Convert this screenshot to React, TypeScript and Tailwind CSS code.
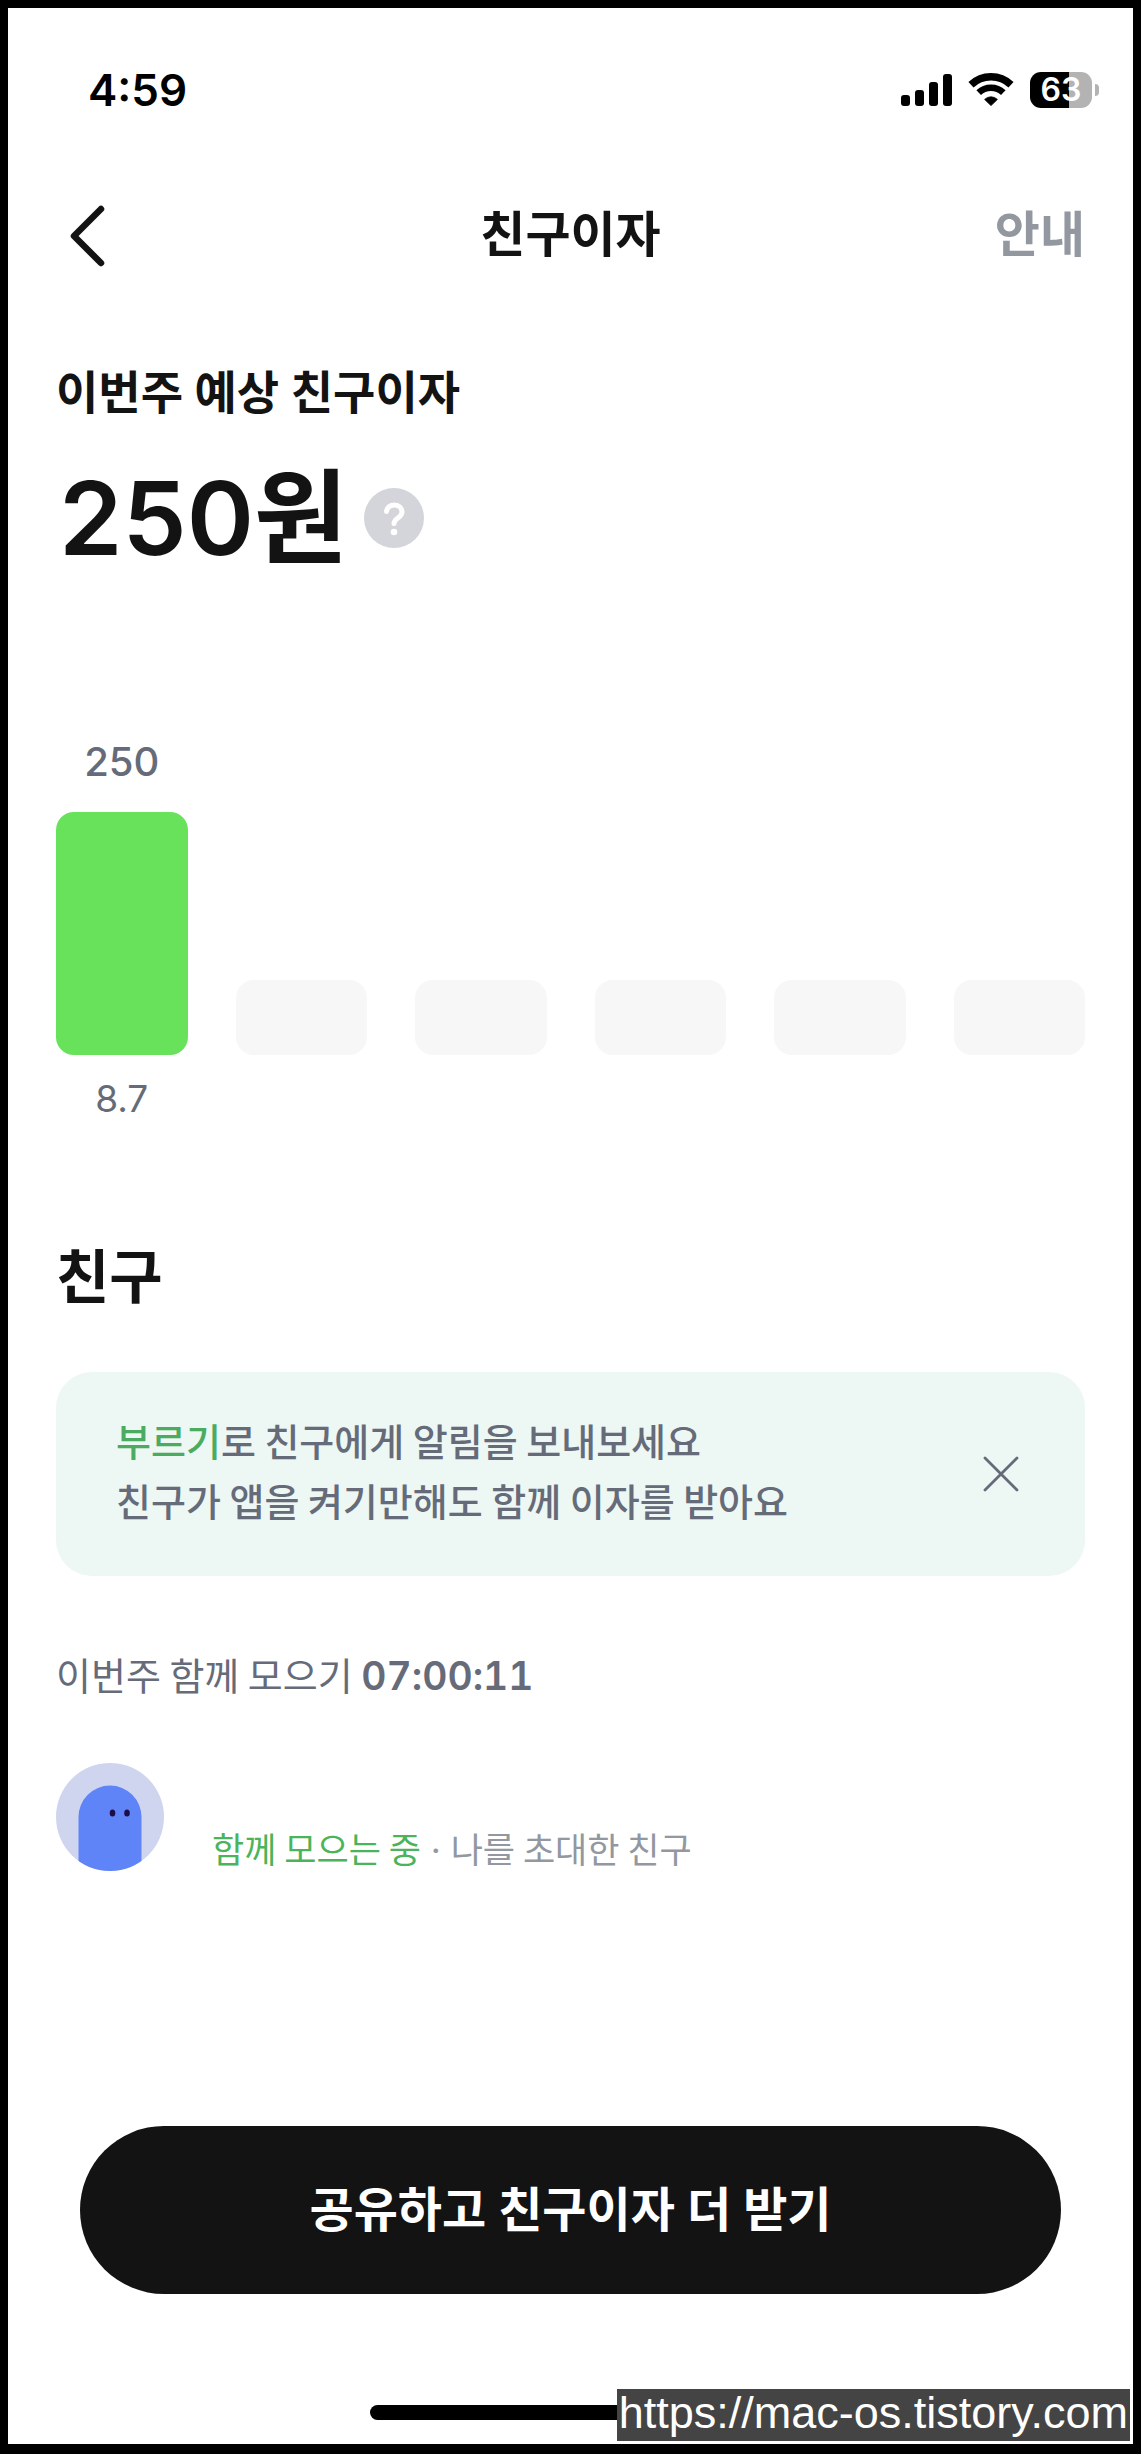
import { useState } from "react";

const bars = [
  { id: 1, amount: "250", date: "8.7", height: "h-[243px]", color: "bg-[#68e15b]" },
  { id: 2, amount: "", date: "", height: "h-[75px]", color: "bg-[#f7f7f7]" },
  { id: 3, amount: "", date: "", height: "h-[75px]", color: "bg-[#f7f7f7]" },
  { id: 4, amount: "", date: "", height: "h-[75px]", color: "bg-[#f7f7f7]" },
  { id: 5, amount: "", date: "", height: "h-[75px]", color: "bg-[#f7f7f7]" },
  { id: 6, amount: "", date: "", height: "h-[75px]", color: "bg-[#f7f7f7]" },
];

function StatusBar() {
  return (
    <div className="flex items-center justify-between pl-20 pr-[34px] pt-16 text-black">
      <span className="text-[44px] leading-9 font-semibold">4:59</span>
      <div className="flex items-center">
        <svg className="mr-4 h-9 w-[51px]" viewBox="0 0 51 36" fill="currentColor">
          <rect x="0" y="23" width="9" height="11" rx="3" />
          <rect x="14" y="18" width="9" height="16" rx="3" />
          <rect x="28" y="10" width="9" height="24" rx="3" />
          <rect x="42" y="2" width="9" height="32" rx="3" />
        </svg>
        <svg className="mr-4 h-9 w-[46px]" viewBox="0 0 46 36" fill="none" stroke="currentColor">
          <path d="M3 12.7 A29 29 0 0 1 43 12.7" strokeWidth="7.4" />
          <path d="M10.7 20.7 A17.8 17.8 0 0 1 35.3 20.7" strokeWidth="6.6" />
          <path
            d="M23 33.6 L16.6 27.4 A9.2 9.2 0 0 1 29.4 27.4 Z"
            fill="currentColor"
            strokeWidth="0.8"
            strokeLinejoin="round"
          />
        </svg>
        <div className="flex h-9 w-[62px] items-center justify-center rounded-[11px] bg-linear-to-r from-black from-63% to-[#b3b3b3] to-63%">
          <span className="text-[32px] leading-9 font-semibold text-white">63</span>
        </div>
        <div className="ml-[3px] h-3 w-1 rounded-r-full bg-[#b3b3b3]" />
      </div>
    </div>
  );
}

function NavBar() {
  return (
    <header className="mt-[95px] grid h-16 grid-cols-3 items-center px-12">
      <button type="button" aria-label="뒤로" className="h-16 w-16 pl-[11px]">
        <svg className="h-16 w-10" viewBox="0 0 40 64" fill="none" stroke="currentColor">
          <path d="M34 6 L7 33 L34 60" strokeWidth="6.5" strokeLinecap="round" strokeLinejoin="round" />
        </svg>
      </button>
      <h1 className="text-center text-[49px] leading-16 font-semibold">친구이자</h1>
      <a href="#" className="justify-self-end text-[49px] leading-16 font-semibold text-[#9297a0]">
        안내
      </a>
    </header>
  );
}

function InterestChart() {
  return (
    <div className="mt-40 grid grid-cols-6 items-end gap-12 text-center text-[#666b79]">
      {bars.map((bar) => (
        <div key={bar.id}>
          <div className="h-12 text-[40px] leading-12 font-medium">{bar.amount}</div>
          <div className={`mt-[26px] rounded-[18px] ${bar.height} ${bar.color}`} />
          <div className="mt-5 h-12 text-[37px] leading-12">{bar.date}</div>
        </div>
      ))}
    </div>
  );
}

function Notice({ onClose }: { onClose: () => void }) {
  return (
    <div className="mt-[63px] flex items-center justify-between rounded-[36px] bg-[#edf7f4] pt-[38px] pb-[46px] pr-16 pl-[60px]">
      <p className="font-['Noto_Sans_CJK_KR',sans-serif] text-[38px] leading-[60px] font-medium text-[#666b79]">
        <span className="text-[#4bab60]">부르기</span>로 친구에게 알림을 보내보세요
        <br />
        친구가 앱을 켜기만해도 함께 이자를 받아요
      </p>
      <button type="button" aria-label="닫기" onClick={onClose} className="pt-2">
        <svg className="h-10 w-10" viewBox="0 0 40 40" fill="none" stroke="#666b79">
          <path d="M4 4 L36 36 M36 4 L4 36" strokeWidth="2.8" strokeLinecap="round" />
        </svg>
      </button>
    </div>
  );
}

function Avatar() {
  return (
    <svg className="h-[108px] w-[108px] shrink-0" viewBox="0 0 108 108">
      <defs>
        <clipPath id="avatar">
          <circle cx="54" cy="54" r="54" />
        </clipPath>
      </defs>
      <g clipPath="url(#avatar)">
        <rect width="108" height="108" fill="#cfd5ee" />
        <path d="M22.5 108 V54 A31.5 31.5 0 0 1 85.5 54 V108 Z" fill="#5f84f8" />
        <ellipse cx="56.5" cy="50" rx="2.8" ry="3.6" fill="#1e0d47" />
        <ellipse cx="71" cy="50" rx="2.8" ry="3.6" fill="#1e0d47" />
      </g>
    </svg>
  );
}

export default function App() {
  const [noticeOpen, setNoticeOpen] = useState(true);

  return (
    <div className="relative flex min-h-screen flex-col border-8 border-b-10 border-black bg-white font-[Inter,'Noto_Sans_CJK_KR',sans-serif] text-[#131313]">
      <StatusBar />
      <NavBar />

      <main className="px-12">
        <h2 className="mt-[97px] text-[46px] leading-14 font-semibold">이번주 예상 친구이자</h2>
        <div className="mt-[38px] flex items-center gap-4 pl-[3px]">
          <strong className="text-[102px] leading-[120px] font-semibold">250원</strong>
          <button type="button" aria-label="도움말">
            <svg className="h-15 w-15" viewBox="0 0 60 60" fill="none">
              <circle cx="30" cy="30" r="30" fill="#d4d5db" />
              <path
                d="M22.5 23.5 C23 19.5 26 17 30.5 17 C35 17 38 20 38 24 C38 30 30 30 30 35.5"
                stroke="#fff"
                strokeWidth="5"
                strokeLinecap="round"
              />
              <circle cx="30" cy="44" r="3.3" fill="#fff" />
            </svg>
          </button>
        </div>

        <InterestChart />

        <h2 className="mt-[114px] font-['Noto_Sans_CJK_KR',sans-serif] text-[58px] leading-18 font-bold">친구</h2>
        {noticeOpen && <Notice onClose={() => setNoticeOpen(false)} />}

        <p className="mt-[74px] font-['Noto_Sans_CJK_KR',sans-serif] text-[38px] leading-12 text-[#666b79]">
          이번주 함께 모으기{" "}
          <span className="font-[Inter,sans-serif] text-[39px] leading-none font-semibold tabular-nums">07:00:11</span>
        </p>

        <div className="mt-[65px] flex items-end gap-12">
          <Avatar />
          <p className="font-['Noto_Sans_CJK_KR',sans-serif] text-[35px] leading-[46px] text-[#9297a0]">
            <span className="text-[#4bb45a]">함께 모으는 중</span>
            <span className="font-[Inter,sans-serif] leading-none"> · </span>
            나를 초대한 친구
          </p>
        </div>
      </main>

      <footer className="mt-auto flex flex-col items-center px-18 pb-6">
        <button
          type="button"
          className="h-42 w-full rounded-full bg-[#131313] text-[48px] leading-16 font-semibold text-white"
        >
          공유하고 친구이자 더 받기
        </button>
        <div className="mt-[111px] h-[15px] w-[402px] rounded-full bg-black" />
      </footer>

      <a
        href="#"
        className="absolute right-[3px] bottom-[3px] bg-[#444444] px-0.5 pb-1 font-['Liberation_Sans',Arial,sans-serif] text-[45px] leading-12 text-white"
      >
        https://mac-os.tistory.com
      </a>
    </div>
  );
}
